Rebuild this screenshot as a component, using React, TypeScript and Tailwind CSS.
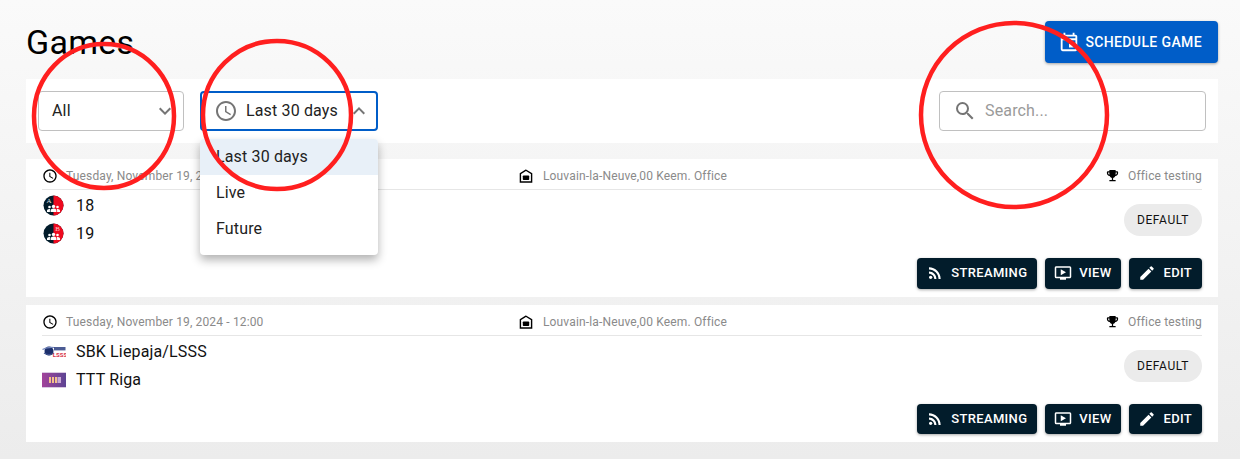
import {
  MdAccessTime,
  MdEdit,
  MdEmojiEvents,
  MdKeyboardArrowDown,
  MdKeyboardArrowUp,
  MdOndemandVideo,
  MdOutlineEvent,
  MdRssFeed,
  MdSearch,
} from "react-icons/md";

function HouseIcon() {
  return (
    <svg width="14" height="14" viewBox="0 0 14 14" className="shrink-0">
      <path d="M7 1.2 1.4 4.6V13h11.2V4.6Z" fill="none" stroke="#000" strokeWidth="1.4" />
      <rect x="3.8" y="6.4" width="6.4" height="4.6" rx="0.8" fill="#000" />
    </svg>
  );
}

function TeamAvatar({ letter, left }: { letter: string; left: boolean }) {
  return (
    <svg width="21" height="21" viewBox="0 0 21 21" className="ml-[1px] shrink-0">
      <defs>
        <clipPath id={`clip-${letter}`}>
          <circle cx="10.5" cy="10.5" r="10" />
        </clipPath>
      </defs>
      <g clipPath={`url(#clip-${letter})`}>
        <rect width="21" height="21" fill="#021c2b" />
        <rect x="10.5" width="11" height="21" fill="#ee0a1f" />
      </g>
      <text
        x={left ? 6 : 14.5}
        y="7.6"
        fontSize="7"
        textAnchor="middle"
        fill={left ? "#e6e6e6" : "#ffc4c4"}
        fontFamily="Liberation Serif, serif"
      >
        {letter}
      </text>
      <g fill="#fff">
        <circle cx="6.5" cy="12" r="1.3" />
        <circle cx="14.5" cy="12" r="1.3" />
        <circle cx="10.5" cy="11.4" r="1.7" />
        <path d="M4 17v-1.3c0-1.1.9-1.8 2.3-1.8.4 0 .8 0 1 .2-.3.4-.4.8-.4 1.4V17Z" />
        <path d="M17 17v-1.3c0-1.1-.9-1.8-2.3-1.8-.4 0-.8 0-1 .2.3.4.4.8.4 1.4V17Z" />
        <path d="M7.6 17v-1.5c0-1.2 1.2-2 2.9-2s2.9.8 2.9 2V17Z" />
      </g>
    </svg>
  );
}

function SbkLogo() {
  return (
    <svg width="24" height="15" viewBox="0 0 24 15" className="shrink-0">
      <circle cx="7" cy="7" r="4.5" fill="#1c2f6b" />
      <path d="M0.5 5.5C4 3.5 8 3 12.5 3.5" stroke="#7486bb" strokeWidth="1.2" fill="none" />
      <path d="M2 9c3 2 7 2 10 0" stroke="#41548f" strokeWidth="1.2" fill="none" />
      <rect x="12" y="3" width="11.5" height="3.4" fill="#2b3e80" opacity="0.85" />
      <text x="18" y="12.6" fontSize="6" fontWeight="700" textAnchor="middle" fill="#d8344c" fontFamily="Roboto, sans-serif">
        LSSS
      </text>
    </svg>
  );
}

function TttLogo() {
  return (
    <svg width="24" height="16" viewBox="0 0 24 16" className="shrink-0">
      <defs>
        <linearGradient id="ttt-bg" x1="0" y1="0" x2="1" y2="0">
          <stop offset="0" stopColor="#a2439a" />
          <stop offset="1" stopColor="#5d4493" />
        </linearGradient>
      </defs>
      <rect width="24" height="16" fill="url(#ttt-bg)" />
      <rect width="24" height="1" fill="#d9c9e2" />
      <rect y="15" width="24" height="1" fill="#d9c9e2" />
      <rect x="7" y="5" width="2" height="6" fill="#f4c08a" />
      <rect x="10" y="5" width="2" height="6" fill="#f4c08a" />
      <rect x="13" y="5" width="2" height="6" fill="#f4c08a" />
      <rect x="15.5" y="5" width="3.5" height="6" fill="#c9a9d6" />
    </svg>
  );
}

function ActionButton({ icon, label, height }: { icon: React.ReactNode; label: string; height: string }) {
  return (
    <button className={`flex items-center gap-[7px] rounded bg-[#021c2b] pr-[10px] pb-[1px] pl-[9px] text-[13px] font-medium tracking-[0.32px] text-white shadow-[0_1px_3px_rgba(0,0,0,0.35)] ${height}`}>
      {icon}
      {label}
    </button>
  );
}

function TeamRow({ logo, name }: { logo: React.ReactNode; name: string }) {
  return (
    <div className="flex h-7 items-center">
      <div className="flex w-[34px] items-center">{logo}</div>
      <span className="text-base tracking-[0.15px] text-[#111]">{name}</span>
    </div>
  );
}

function GameCard({
  teams,
  top,
  buttonHeight,
}: {
  teams: { logo: React.ReactNode; name: string }[];
  top: string;
  buttonHeight: string;
}) {
  return (
    <div className={`bg-white px-4 ${top}`}>
      <div className="flex h-[31px] items-center border-b border-[#e6e6e6] pt-[3px] text-xs tracking-[0.15px] text-[#8a8a8a]">
        <div className="flex w-[477px] items-center gap-[8px]">
          <MdAccessTime size={16} className="text-black" />
          Tuesday, November 19, 2024 - 12:00
        </div>
        <div className="flex flex-1 items-center gap-[10px]">
          <HouseIcon />
          Louvain-la-Neuve,00 Keem. Office
        </div>
        <div className="flex items-center gap-2">
          <MdEmojiEvents size={15} className="text-black" />
          Office testing
        </div>
      </div>
      <div className="flex h-[55px] items-center justify-between pt-1">
        <div className="flex flex-col">
          {teams.map((t) => (
            <TeamRow key={t.name} logo={t.logo} name={t.name} />
          ))}
        </div>
        <span className="flex h-8 items-center rounded-full bg-[#ebebeb] px-[13px] text-xs font-normal tracking-[0.6px] text-[#111]">
          DEFAULT
        </span>
      </div>
      <div className="flex justify-end gap-2 pt-[13px] pb-2">
        <ActionButton height={buttonHeight} icon={<MdRssFeed size={18} />} label="STREAMING" />
        <ActionButton height={buttonHeight} icon={<MdOndemandVideo size={18} />} label="VIEW" />
        <ActionButton height={buttonHeight} icon={<MdEdit size={18} />} label="EDIT" />
      </div>
    </div>
  );
}

export default function App() {
  return (
    <div className="relative h-[459px] w-[1240px] overflow-hidden bg-gradient-to-b from-[#fafafa] to-[#ececec] pr-[22px] pl-[26px] font-['Roboto',sans-serif]">
      {/* Header */}
      <div className="flex h-[79px] items-start justify-between">
        <h1 className="pt-5 text-[34px] leading-[44px] font-normal tracking-[0.25px] text-black">Games</h1>
        <button className="mt-[21px] flex h-[42px] items-center gap-[5px] rounded bg-[#005dc8] pr-4 pl-[13px] text-sm font-medium tracking-[0.38px] text-white shadow-[0_1px_3px_rgba(0,0,0,0.35)]">
          <MdOutlineEvent size={22} />
          SCHEDULE GAME
        </button>
      </div>

      {/* Filters */}
      <div className="flex h-16 items-center justify-between bg-white px-3">
        <div className="flex items-center gap-4">
          <div className="flex h-10 w-[146px] items-center justify-between rounded border border-[#c0c0c0] pr-[6px] pl-[13px] text-base tracking-[0.15px] text-[#222]">
            All
            <MdKeyboardArrowDown size={24} className="text-[#757575]" />
          </div>
          <div className="relative">
            <div className="flex h-10 w-[178px] items-center justify-between rounded border-2 border-[#005dc8] pr-[5px] pl-3 text-base tracking-[0.15px] text-[#222]">
              <div className="flex items-center gap-2">
                <MdAccessTime size={24} className="shrink-0 text-[#757575]" />
                <span className="whitespace-nowrap">Last 30 days</span>
              </div>
              <MdKeyboardArrowUp size={24} className="shrink-0 text-[#757575]" />
            </div>
            {/* Open menu */}
            <div className="absolute top-[48px] left-0 z-10 w-[178px] overflow-hidden rounded bg-white text-base tracking-[0.15px] text-[#222] shadow-[0_5px_10px_rgba(0,0,0,0.3)]">
              <div className="flex h-9 items-center bg-[#e8f0f8] px-4">Last 30 days</div>
              <div className="flex h-9 items-center px-4">Live</div>
              <div className="flex h-9 items-center px-4">Future</div>
              <div className="h-2" />
            </div>
          </div>
        </div>
        <div className="flex h-10 w-[267px] items-center gap-2 rounded border border-[#c0c0c0] pl-[13px] text-base tracking-[0.15px] text-[#9a9a9a]">
          <MdSearch size={24} className="text-[#757575]" />
          Search...
        </div>
      </div>

      {/* Games */}
      <GameCard
        top="mt-4"
        buttonHeight="h-[31px]"
        teams={[
          { logo: <TeamAvatar letter="A" left />, name: "18" },
          { logo: <TeamAvatar letter="B" left={false} />, name: "19" },
        ]}
      />
      <GameCard
        top="mt-2"
        buttonHeight="h-[30px]"
        teams={[
          { logo: <SbkLogo />, name: "SBK Liepaja/LSSS" },
          { logo: <TttLogo />, name: "TTT Riga" },
        ]}
      />

      {/* Red circles drawn over the screenshot */}
      <svg width="1240" height="459" className="pointer-events-none absolute top-0 left-0 z-20">
        <g fill="none" stroke="#ff1f1f" strokeWidth="4.5">
          <ellipse cx="104" cy="116" rx="70" ry="72" />
          <ellipse cx="277" cy="115" rx="74" ry="74" />
          <ellipse cx="1014" cy="115" rx="93" ry="92" />
        </g>
      </svg>
    </div>
  );
}
